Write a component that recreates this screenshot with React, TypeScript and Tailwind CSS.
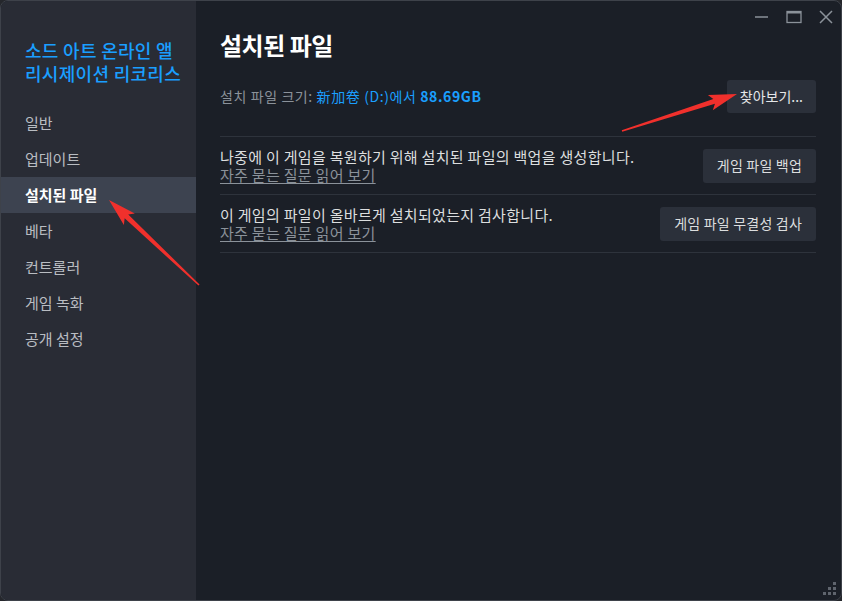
import { Fragment } from "react"

const navItems = ["일반", "업데이트", "설치된 파일", "베타", "컨트롤러", "게임 녹화", "공개 설정"]

const arrowPoints = (tx: number, ty: number, hx: number, hy: number) => {
  const dx = hx - tx
  const dy = hy - ty
  const len = Math.hypot(dx, dy)
  const ux = dx / len
  const uy = dy / len
  const nx = -uy
  const ny = ux
  const headLen = 24
  const bx = hx - ux * headLen
  const by = hy - uy * headLen
  const pts: [number, number][] = [
    [tx + nx * 0.8, ty + ny * 0.8],
    [bx + nx * 2.6, by + ny * 2.6],
    [bx - ux * 4 + nx * 8, by - uy * 4 + ny * 8],
    [hx, hy],
    [bx - ux * 4 - nx * 8, by - uy * 4 - ny * 8],
    [bx - nx * 2.6, by - ny * 2.6],
    [tx - nx * 0.8, ty - ny * 0.8],
  ]
  return pts.map((p) => p.join(",")).join(" ")
}

const RowButton = ({ label }: { label: string }) => (
  <button className="h-[34px] px-[14px] rounded-[3px] bg-[#2b303a] text-[14px] tracking-[0.2px] text-[#dcdedf]">
    {label}
  </button>
)

const App = () => {
  return (
    <div
      className="w-[842px] h-[601px] bg-[#25272c]"
      style={{ fontFamily: '"Noto Sans CJK KR", "Noto Sans", sans-serif' }}
    >
      <div className="relative w-full h-full flex rounded-[8px] overflow-hidden border border-[#3e424a] bg-[#1b1f27]">
        <aside className="w-[195px] shrink-0 bg-[#292c35] pt-[38px]">
          <div className="pl-[24px] flex flex-col text-[18px] leading-[23px] tracking-[0.3px] font-medium text-[#1a9fff]">
            <span>소드 아트 온라인 앨</span>
            <span>리시제이션 리코리스</span>
          </div>
          <nav className="mt-[20px] flex flex-col">
            {navItems.map((item) => (
              <div
                key={item}
                className={
                  item === "설치된 파일"
                    ? "h-[36px] flex items-center pl-[24px] text-[15px] font-bold text-white bg-[#3d4350]"
                    : "h-[36px] flex items-center pl-[24px] text-[15px] text-[#b9bdc2]"
                }
              >
                {item}
              </div>
            ))}
          </nav>
        </aside>

        <main className="flex-1 flex flex-col pl-[24px] pr-[25px]">
          <div className="h-[30px] flex justify-end items-start -mr-[25px]">
            <div className="flex items-center gap-[6px] pr-[2px] pt-[8px] text-[#8b929a]">
              <svg width="26" height="16" viewBox="0 0 26 16">
                <line x1="6" y1="8" x2="19" y2="8" stroke="currentColor" strokeWidth="1.6" />
              </svg>
              <svg width="26" height="16" viewBox="0 0 26 16">
                <rect x="6" y="2.5" width="14" height="11" fill="none" stroke="currentColor" strokeWidth="1.3" />
                <line x1="6" y1="3.5" x2="20" y2="3.5" stroke="currentColor" strokeWidth="2" />
              </svg>
              <svg width="26" height="16" viewBox="0 0 26 16">
                <path d="M7 2 L19 14 M19 2 L7 14" stroke="currentColor" strokeWidth="1.5" />
              </svg>
            </div>
          </div>

          <h1 className="h-[28px] leading-[28px] text-[24px] tracking-[-0.5px] font-bold text-white">설치된 파일</h1>

          <div className="mt-[21px] h-[33px] flex items-center justify-between">
            <div className="text-[14px] tracking-[0.6px] text-[#8b929a]">
              설치 파일 크기: <span className="text-[#1a9fff]">新加卷 (D:)에서 </span>
              <span className="text-[#1a9fff] font-bold">88.69GB</span>
            </div>
            <button className="h-[33px] px-[13px] rounded-[3px] bg-[#2b303a] text-[14px] text-[#e4e6e8]">
              찾아보기...
            </button>
          </div>

          <div className="mt-[23px] border-t border-[#2e333c]">
            {[
              "나중에 이 게임을 복원하기 위해 설치된 파일의 백업을 생성합니다.",
              "이 게임의 파일이 올바르게 설치되었는지 검사합니다.",
            ].map((text, i) => (
              <Fragment key={text}>
                <div className="h-[58px] flex items-center justify-between border-b border-[#2e333c]">
                  <div className="flex flex-col gap-[1px]">
                    <span className="text-[15px] leading-[17px] tracking-[0.3px] text-[#dcdedf]">{text}</span>
                    <span className="text-[15px] leading-[17px] tracking-[0.3px] text-[#8b929a] underline underline-offset-2">
                      자주 묻는 질문 읽어 보기
                    </span>
                  </div>
                  <RowButton label={i === 0 ? "게임 파일 백업" : "게임 파일 무결성 검사"} />
                </div>
              </Fragment>
            ))}
          </div>
        </main>

        <svg className="absolute right-[4px] bottom-[3px]" width="16" height="16" viewBox="0 0 16 16">
          {[
            [12, 1],
            [7, 6],
            [12, 6],
            [2, 11],
            [7, 11],
            [12, 11],
          ].map(([x, y]) => (
            <rect key={`${x}-${y}`} x={x} y={y} width="3" height="3" fill="#5f646d" />
          ))}
        </svg>

        <svg className="absolute inset-0 pointer-events-none" width="842" height="601">
          <polygon points={arrowPoints(198, 284, 108, 199)} fill="#f0302c" />
          <polygon points={arrowPoints(621, 130, 736, 93)} fill="#f0302c" />
        </svg>
      </div>
    </div>
  )
}

export default App
